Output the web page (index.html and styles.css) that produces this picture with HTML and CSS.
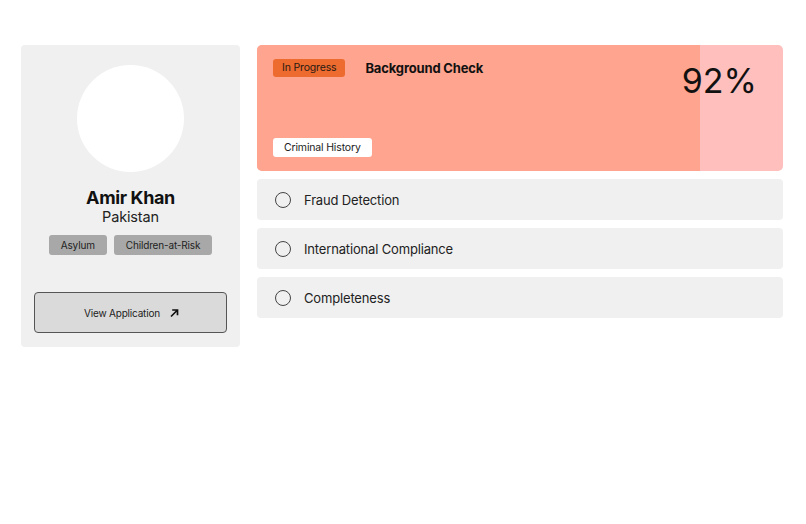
FILE: index.html
```html
<!DOCTYPE html>
<html>
<head>
<meta charset="utf-8">
<link rel="stylesheet" href="styles.css">
</head>
<body>
<div class="page">
  <aside class="profile">
    <div class="avatar"></div>
    <div class="name">Amir Khan</div>
    <div class="country">Pakistan</div>
    <div class="tags">
      <span class="tag">Asylum</span>
      <span class="tag">Children-at-Risk</span>
    </div>
    <button class="view-btn">View Application
      <svg width="10" height="10" viewBox="0 0 10 10"><path d="M2 8.5 L8 2.5 M3.2 2 H8.5 V7.3" fill="none" stroke="#111" stroke-width="1.7"/></svg>
    </button>
  </aside>
  <main class="checks">
    <section class="active-check">
      <div class="fill" style="width:84.2%"></div>
      <div class="active-top">
        <span class="status">In Progress</span>
        <span class="title">Background Check</span>
        <span class="percent">92%</span>
      </div>
      <span class="chip">Criminal History</span>
    </section>
    <div class="row"><span class="radio"></span>Fraud Detection</div>
    <div class="row"><span class="radio"></span>International Compliance</div>
    <div class="row"><span class="radio"></span>Completeness</div>
  </main>
</div>
</body>
</html>
```

FILE: styles.css
```css
* { box-sizing: border-box; }
body {
  margin: 0;
  background: #ffffff;
  font-family: Inter, "Noto Sans", sans-serif;
  letter-spacing: -0.01em;
  color: #111;
}
.page {
  display: flex;
  align-items: flex-start;
  gap: 17px;
  padding: 45px 0 0 21px;
}
.profile {
  width: 219px;
  height: 302px;
  background: #f0f0f0;
  border-radius: 4px;
  padding: 20px 13px 14px;
  display: flex;
  flex-direction: column;
  align-items: center;
}
.avatar {
  width: 107px;
  height: 107px;
  border-radius: 50%;
  background: #ffffff;
}
.name {
  margin-top: 16px;
  font-size: 18px;
  font-weight: 700;
  line-height: 20px;
  letter-spacing: -0.02em;
  color: #111;
}
.country {
  font-size: 14.5px;
  line-height: 17px;
  color: #222;
}
.tags {
  display: flex;
  gap: 7px;
  margin-top: 10px;
}
.tag {
  background: #a8a8a8;
  border-radius: 3px;
  height: 20px;
  line-height: 20px;
  font-size: 10px;
  padding: 0 12px;
  color: #222;
}
.view-btn {
  margin-top: auto;
  width: 193px;
  height: 41px;
  background: #dadada;
  border: 1px solid #555;
  border-radius: 4px;
  font-family: inherit;
  letter-spacing: -0.02em;
  font-size: 10px;
  color: #222;
  display: flex;
  align-items: center;
  justify-content: center;
  gap: 9px;
  padding: 0 0 0 2px;
}
.checks {
  width: 526px;
  display: flex;
  flex-direction: column;
  gap: 8px;
}
.active-check {
  position: relative;
  height: 126px;
  background: #ffbfbd;
  border-radius: 5px;
  overflow: hidden;
  padding: 14px 16px 14px;
  display: flex;
  flex-direction: column;
  justify-content: space-between;
  align-items: flex-start;
}
.fill {
  position: absolute;
  left: 0;
  top: 0;
  bottom: 0;
  background: #ffa48e;
}
.active-top {
  position: relative;
  display: flex;
  align-items: flex-start;
  width: 100%;
}
.status {
  background: #ee6b2f;
  border-radius: 3px;
  height: 18px;
  line-height: 18px;
  padding: 0 9px;
  font-size: 10.5px;
  color: #2a1a12;
}
.title {
  margin-left: 20px;
  font-size: 13px;
  font-weight: 700;
  line-height: 18px;
  color: #111;
}
.percent {
  margin-left: auto;
  margin-right: 10px;
  margin-top: 1px;
  font-size: 34px;
  line-height: 42px;
  letter-spacing: 0;
  font-weight: 400;
  color: #111;
}
.chip {
  position: relative;
  background: #ffffff;
  border-radius: 3px;
  height: 19px;
  line-height: 19px;
  padding: 0 11px;
  font-size: 10.5px;
  color: #222;
}
.row {
  height: 41px;
  background: #f0f0f0;
  border-radius: 4px;
  display: flex;
  align-items: center;
  padding-left: 18px;
  font-size: 13px;
  color: #222;
}
.radio {
  width: 16px;
  height: 16px;
  border: 1px solid #444;
  border-radius: 50%;
  margin-right: 13px;
}
```
